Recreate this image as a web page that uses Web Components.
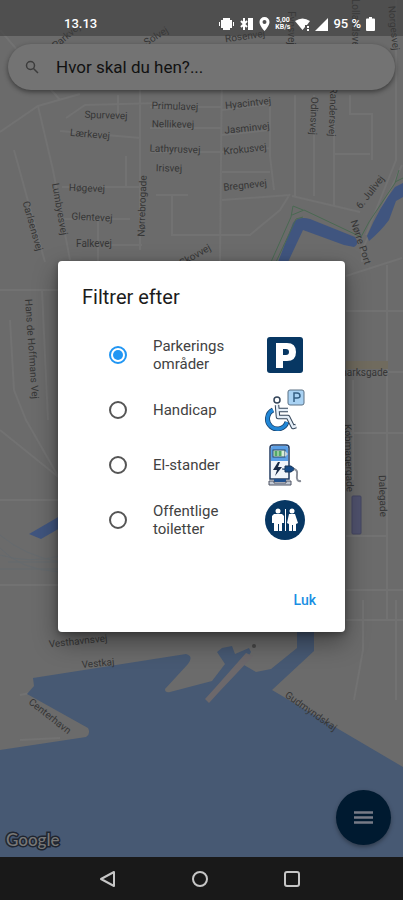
<!DOCTYPE html>
<html lang="da">
<head>
<meta charset="utf-8">
<meta name="viewport" content="width=device-width, initial-scale=1">
<title>Parkering</title>
<style>
body {
    margin: 0;
    font-family: Roboto, "Liberation Sans", sans-serif;
    background: #696969;
}
</style>
</head>
<body>
<phone-screen>
    <city-map slot="map"></city-map>
    <status-bar slot="status" time="13.13" battery="95 %"></status-bar>
    <search-bar slot="search" text="Hvor skal du hen?..."></search-bar>
    <map-footer slot="footer"></map-footer>
    <filter-dialog slot="dialog">
        <span slot="title">Filtrer efter</span>
        <filter-option icon="parking" checked>Parkerings områder</filter-option>
        <filter-option icon="handicap">Handicap</filter-option>
        <filter-option icon="charger">El-stander</filter-option>
        <filter-option icon="toilet">Offentlige toiletter</filter-option>
        <span slot="close">Luk</span>
    </filter-dialog>
    <nav-bar slot="nav"></nav-bar>
</phone-screen>

<script>
class PhoneScreen extends HTMLElement {
    constructor() {
        super();
        this.attachShadow({mode: 'open'}).innerHTML = `
        <style>
        :host {
            display: grid;
            grid-template-columns: minmax(0, 1fr);
            grid-template-rows: auto 1fr auto;
            min-height: 100vh;
            overflow: hidden;
        }
        .map { grid-area: 1 / 1 / 4 / 2; display: grid; }
        .status { grid-area: 1 / 1; z-index: 1; }
        .main {
            grid-area: 2 / 1;
            z-index: 1;
            display: flex;
            flex-direction: column;
            justify-content: space-between;
        }
        .dialog {
            grid-area: 2 / 1;
            z-index: 2;
            align-self: center;
            padding: 0 58px;
        }
        .nav { grid-area: 3 / 1; z-index: 1; }
        </style>
        <div class="map"><slot name="map"></slot></div>
        <div class="status"><slot name="status"></slot></div>
        <div class="main">
            <slot name="search"></slot>
            <slot name="footer"></slot>
        </div>
        <div class="dialog"><slot name="dialog"></slot></div>
        <div class="nav"><slot name="nav"></slot></div>`;
    }
}

// x, y, angle, name - anchored at the middle of the word
const streets = [
    [66, 36, -40, 'Parkvej'],
    [156, 36, -32, 'Solvej'],
    [245, 36, -8, 'Rosenvej'],
    [291, 28, 90, 'Fynsvej'],
    [355, 24, 90, 'Lollandsvej'],
    [394, 28, 84, 'Norgesvej'],
    [106, 115, 2, 'Spurvevej'],
    [90, 134, 5, 'Lærkevej'],
    [175, 106, 2, 'Primulavej'],
    [173, 124, 1, 'Nellikevej'],
    [175, 149, 2, 'Lathyrusvej'],
    [169, 168, 1, 'Irisvej'],
    [248, 103, -6, 'Hyacintvej'],
    [247, 128, -6, 'Jasminvej'],
    [245, 149, -6, 'Krokusvej'],
    [245, 185, -6, 'Bregnevej'],
    [314, 116, 92, 'Odinsvej'],
    [333, 112, 92, 'Randersvej'],
    [87, 188, 2, 'Høgevej'],
    [92, 217, 3, 'Glentevej'],
    [94, 243, 0, 'Falkevej'],
    [142, 206, -88, 'Nørrebrogade'],
    [60, 209, 80, 'Lumbyesvej'],
    [33, 226, 74, 'Carlsensvej'],
    [195, 255, -30, 'Skovvej'],
    [370, 192, -52, '6. Julivej'],
    [361, 242, 72, 'Nørre Port'],
    [32, 349, 86, 'Hans de Hoffmans Vej'],
    [363, 372, 0, 'marksgade'],
    [349, 458, 88, 'Købmagergade'],
    [383, 496, 88, 'Dalegade'],
    [78, 641, -6, 'Vesthavnsvej'],
    [98, 663, -5, 'Vestkaj'],
    [50, 716, 38, 'Centerhavn'],
    [311, 711, 35, 'Gudmyndskaj']
];

class CityMap extends HTMLElement {
    constructor() {
        super();
        const labels = streets.map(([x, y, angle, name]) =>
            `<text transform="translate(${x} ${y}) rotate(${angle})">${name}</text>`).join('');
        this.attachShadow({mode: 'open'}).innerHTML = `
        <style>
        :host { display: grid; background: #6b6b6b; }
        svg { width: 100%; height: 100%; min-height: 0; }
        .roads { fill: none; stroke: #727272; stroke-width: 2; }
        .rails { fill: none; stroke: #656a6e; stroke-width: 1; }
        .water { fill: #475973; }
        .canal { fill: #40557f; }
        .park { fill: none; stroke: #4a6952; stroke-width: 1; }
        text {
            font: 10px Roboto, "Liberation Sans", sans-serif;
            fill: #363636;
            text-anchor: middle;
            dominant-baseline: central;
        }
        </style>
        <svg viewBox="0 0 403 900" preserveAspectRatio="xMidYMid slice" role="img" aria-label="Kort">
            <path class="roads" d="M0 132L38 106L80 94M38 106L53 170L70 260M14 150L36 230L45 262M0 30L60 100M60 131L140 138V250M66 118L85 105L160 103M118 95V115M62 187H142M126 156V188M60 219H130M98 220V262M108 245H142M0 290H58M42 290L48 420M10 320L14 390L26 420L58 476M0 430L62 480M0 500H60M0 585H60M140 85V138M222 60L220 262M150 107H222M150 128H222M150 152H222M156 195H188M172 195V235H250L280 210L290 194M222 110L270 104V156L274 190M222 135L270 130M222 152L270 148M222 172H270M222 200L290 195M295 95V196M314 95V196M334 90V205M350 95V114H372V160M335 154H370M292 196L360 212M396 0V160L366 235M402 165L362 250V262M346 276L402 258M346 311H403M346 372H403M387 265V620M353 380V480M346 433H403M346 536H386M346 590H403M363 600V650L354 700M396 600V700M346 620H403M20 695L45 690M20 740L60 738"/>
            <path class="rails" d="M0 535Q25 556 60 562M0 555Q30 564 60 556M8 562H60M0 569H60M0 548Q20 570 60 572"/>
            <rect x="346" y="361" width="42" height="8" fill="#706b5e"/>
            <path class="canal" d="M278 262L293 223Q298 216 310 219L355 237Q360 244 354 247L344 245L303 230L288 262Z"/>
            <path class="canal" d="M367 236Q380 206 395 187L403 183V197L396 201L389 220Q380 232 369 241Z"/>
            <path class="canal" d="M29 534L60 516V528L41 539Z"/>
            <path class="park" d="M271 262L291 217L293 206L303 210M292 215L304 210L361 237L369 222L395 183L399 170M395 182L403 178M276 262L296 219L303 217"/>
            <path class="water" d="M0 750L86 737Q91 734 88 728L27 694L34 686L33 678L186 654Q194 656 188 664L165 689Q165 693 170 692L212 681L225 664L217 652L222 648L232 646L235 654L249 648L251 652L244 665L256 672L271 669L297 648V632H314V651L272 690L403 767V858H0Z"/>
            <path d="M205 699L215 688L246 653L253 656L219 692L209 703Z" fill="#6c686b"/>
            <circle cx="254" cy="646" r="2" fill="#464646"/>
            <rect x="352" y="496" width="9" height="38" rx="1" fill="#50526e" stroke="#444662"/>
            ${labels}
        </svg>`;
    }
}

class StatusBar extends HTMLElement {
    connectedCallback() {
        if (this.shadowRoot) return;
        this.attachShadow({mode: 'open'}).innerHTML = `
        <style>
        :host {
            display: flex;
            justify-content: space-between;
            align-items: center;
            height: 24px;
            padding: 12px 28px 0 64px;
            color: #fff;
            background: rgba(60, 60, 60, .6);
            font-size: 13px;
            font-weight: 500;
            line-height: 16px;
        }
        .icons { display: flex; align-items: center; gap: 5px; }
        .speed { font-size: 7px; line-height: 7px; font-weight: 700; text-align: center; }
        svg { display: block; fill: #fff; }
        </style>
        <time>${this.getAttribute('time')}</time>
        <div class="icons">
            <svg width="15" height="14" viewBox="0 0 15 14"><path d="M4 1h7v12H4zM2 3h2v8H2zM11 3h2v8h-2zM0 5h1v4H0zM14 5h1v4h-1z"/></svg>
            <svg width="15" height="14" viewBox="0 0 15 14"><path d="M9 1h5v12H9z"/><path d="M2 4l6 6M2 10l6-6M5 1v12" stroke="#fff" stroke-width="2"/></svg>
            <svg width="11" height="14" viewBox="0 0 11 14"><path fill-rule="evenodd" d="M5.500 0A5 5 0 0 0 .5 5C.5 9 5.500 14 5.500 14S10.500 9 10.500 5A5 5 0 0 0 5.500 0zM5.500 3a2 2 0 1 1 0 4a2 2 0 0 1 0-4z"/></svg>
            <div class="speed">5,00<br>KB/s</div>
            <svg width="15" height="13" viewBox="0 0 15 13"><path d="M0 3Q7.500-2 15 3L12 7H10V9L7.500 12zM12 8h2v2h-2zM12 11h2v2h-2z"/></svg>
            <svg width="13" height="13" viewBox="0 0 13 13"><path d="M13 0V13H0z"/></svg>
            <span>${this.getAttribute('battery')}</span>
            <svg width="9" height="14" viewBox="0 0 9 14"><path d="M3 0h3v1.500h2q1 0 1 1V13q0 1-1 1H1q-1 0-1-1V2.500q0-1 1-1h2z"/></svg>
        </div>`;
    }
}

class SearchBar extends HTMLElement {
    connectedCallback() {
        if (this.shadowRoot) return;
        this.attachShadow({mode: 'open'}).innerHTML = `
        <style>
        :host { display: block; padding: 8px 8px 0; }
        label {
            display: flex;
            align-items: center;
            gap: 16px;
            height: 46px;
            padding: 0 16px;
            border-radius: 24px;
            background: #737373;
            box-shadow: 0 2px 5px rgba(0, 0, 0, .45);
        }
        input {
            flex: 1;
            min-width: 0;
            padding: 0;
            border: 0;
            outline: 0;
            background: none;
            color: #111;
            font: inherit;
            font-size: 17px;
        }
        input::placeholder { color: #111; opacity: 1; }
        svg { flex: none; fill: none; stroke: #3c3c3c; stroke-width: 1.5; }
        </style>
        <label>
            <svg width="16" height="16" viewBox="0 0 16 16"><circle cx="6.500" cy="6.500" r="4"/><path d="M9.500 9.500L14 14"/></svg>
            <input type="text" placeholder="${this.getAttribute('text')}" aria-label="Søg">
        </label>`;
    }
}

class MapFooter extends HTMLElement {
    constructor() {
        super();
        this.attachShadow({mode: 'open'}).innerHTML = `
        <style>
        :host {
            display: flex;
            justify-content: space-between;
            align-items: flex-end;
            padding: 0 12px 7px 6px;
        }
        .logo {
            font: 500 17px/20px Lato, sans-serif;
            color: #777;
            -webkit-text-stroke: 3px #1f2530;
            paint-order: stroke fill;
        }
        button {
            display: grid;
            place-items: center;
            width: 55px;
            height: 55px;
            margin-bottom: 5px;
            padding: 0;
            border: 0;
            border-radius: 50%;
            background: #001a30;
            box-shadow: 0 2px 4px rgba(0, 0, 0, .35);
        }
        </style>
        <span class="logo">Google</span>
        <button type="button" aria-label="Menu">
            <svg width="19" height="15" viewBox="0 0 19 15" fill="none" stroke="#777b86" stroke-width="2.500"><path d="M0 2.500h19M0 7.500h19M0 12.500h19"/></svg>
        </button>`;
    }
}

class FilterDialog extends HTMLElement {
    constructor() {
        super();
        this.attachShadow({mode: 'open'}).innerHTML = `
        <style>
        section {
            display: flex;
            flex-direction: column;
            padding: 24px 24px 14px;
            border-radius: 4px;
            background: #fff;
            box-shadow: 0 10px 24px rgba(0, 0, 0, .4), 0 2px 6px rgba(0, 0, 0, .3);
        }
        h2 {
            margin: 0 0 18px;
            color: #1c1c1c;
            font-size: 20px;
            font-weight: 400;
            line-height: 24px;
        }
        .options { display: grid; margin-bottom: 35px; }
        button {
            align-self: flex-end;
            height: 36px;
            padding: 0 5px;
            border: 0;
            background: none;
            color: #1a8fe3;
            font: inherit;
            font-size: 14px;
            font-weight: 500;
        }
        </style>
        <section role="dialog" aria-labelledby="title">
            <h2 id="title"><slot name="title"></slot></h2>
            <div class="options" role="radiogroup" aria-labelledby="title"><slot></slot></div>
            <button type="button"><slot name="close"></slot></button>
        </section>`;
        this.shadowRoot.querySelector('button').onclick = () => { this.hidden = true; };
        // radios in separate shadow roots don't group by name
        this.addEventListener('pick', e => {
            this.querySelectorAll('filter-option').forEach(o => { o.checked = o === e.target; });
        });
    }
}

const icons = {
    parking: `<rect x="3" y="3" width="36" height="36" rx="3" fill="#073763"/>
        <path fill="#fff" fill-rule="evenodd" d="M12 9H23Q32 9 32 18Q32 27 23 27H19V34H12zM19 15V21H22Q25 21 25 18Q25 15 22 15z"/>`,
    handicap: `<rect x="24" y="1" width="16" height="15" rx="2" fill="#a9d2f3" stroke="#5b7184"/>
        <path d="M30 13V4H33Q36 4 36 7Q36 9 33 9H30" fill="none" stroke="#345f83" stroke-width="1.500"/>
        <path d="M9 21A10 10 0 1 0 23 33" fill="none" stroke="#173f69" stroke-width="5"/>
        <path d="M9 21A10 10 0 1 0 23 33" fill="none" stroke="#2186d5" stroke-width="3.500"/>
        <path d="M13 16L14 28H24L29 38L32 37M14 21H24" fill="none" stroke="#34465a" stroke-width="4.500" stroke-linejoin="round"/>
        <path d="M13 16L14 28H24L29 38L32 37M14 21H24" fill="none" stroke="#e6eff8" stroke-width="2.500" stroke-linejoin="round"/>
        <circle cx="13" cy="11" r="3" fill="#fff" stroke="#34465a" stroke-width="1.500"/>`,
    charger: `<path d="M6 35V4Q6 1 9 1H22Q25 1 25 4V35z" fill="#f1f5fa" stroke="#233c62" stroke-width="1.500"/>
        <path d="M7 17V4Q7 2 9 2H22Q24 2 24 4V17z" fill="#5b9fe6"/>
        <rect x="9" y="6" width="12" height="7" fill="#d7eed7" stroke="#29496b"/>
        <path d="M12 7V12M16 7V12" stroke="#54a866" stroke-width="3"/>
        <path d="M21 7L24 10L21 13z" fill="#c8d2db"/>
        <path d="M14 18L9 26H13L11 32L18 23H14L16 18z" fill="#182b48"/>
        <path d="M18 25H21V22H27L31 25L27 28H21V26" fill="#164b87" stroke="#173458"/>
        <path d="M30 25Q34 26 33 31Q32 38 37 37" fill="none" stroke="#8b8f98" stroke-width="2"/>
        <path d="M10 35H22V38H10z" fill="#205291"/>
        <path d="M5 37H10V39H22V37H27V41H5z" fill="#c2c9d4" stroke="#4c5363" stroke-width="1"/>`,
    toilet: `<circle cx="21" cy="21" r="20" fill="#073763"/>
        <g fill="#fff"><circle cx="14" cy="12" r="2.500"/><path d="M10 15H18L20 17V24H18V32H15V25H14V32H10V24H8V17z"/>
        <path d="M21 10H22V32H21z"/><circle cx="28" cy="12" r="2.500"/><path d="M25 15H31L34 24L32 25V32H29V26H28V32H25V25L23 24z"/></g>`
};

class FilterOption extends HTMLElement {
    connectedCallback() {
        if (this.shadowRoot) return;
        this.attachShadow({mode: 'open'}).innerHTML = `
        <style>
        :host { display: block; }
        label {
            display: flex;
            align-items: center;
            min-height: 55px;
            padding: 0 15px 0 27px;
            color: #424242;
            font-size: 15px;
            line-height: 18px;
        }
        input {
            flex: none;
            appearance: none;
            display: grid;
            place-items: center;
            width: 18px;
            height: 18px;
            margin: 0 26px 0 0;
            border: 2px solid #555;
            border-radius: 50%;
        }
        input:checked { border-color: #2196f3; }
        input:checked::before {
            content: "";
            width: 10px;
            height: 10px;
            border-radius: 50%;
            background: #2196f3;
        }
        .name { flex: 1; padding-right: 24px; }
        svg { flex: none; }
        </style>
        <label>
            <input type="radio">
            <span class="name"><slot></slot></span>
            <svg width="42" height="42" viewBox="0 0 42 42" aria-hidden="true">${icons[this.getAttribute('icon')]}</svg>
        </label>`;
        this.input = this.shadowRoot.querySelector('input');
        this.input.checked = this.hasAttribute('checked');
        this.input.onchange = () => this.dispatchEvent(new Event('pick', {bubbles: true}));
    }

    set checked(value) {
        this.input.checked = value;
    }
}

class NavBar extends HTMLElement {
    constructor() {
        super();
        this.attachShadow({mode: 'open'}).innerHTML = `
        <style>
        nav {
            display: flex;
            justify-content: center;
            align-items: center;
            gap: 68px;
            height: 43px;
            padding-right: 3px;
            background: #191919;
        }
        button { display: grid; padding: 0; border: 0; background: none; }
        svg { fill: none; stroke: #c6c6c6; stroke-width: 2; }
        </style>
        <nav>
            <button type="button" aria-label="Tilbage"><svg width="24" height="24" viewBox="0 0 24 24"><path stroke-linejoin="round" d="M18 5V19L5 12z"/></svg></button>
            <button type="button" aria-label="Hjem"><svg width="24" height="24" viewBox="0 0 24 24"><circle cx="12" cy="12" r="7"/></svg></button>
            <button type="button" aria-label="Oversigt"><svg width="24" height="24" viewBox="0 0 24 24"><rect x="5" y="5" width="14" height="14" rx="2"/></svg></button>
        </nav>`;
    }
}

customElements.define('phone-screen', PhoneScreen);
customElements.define('city-map', CityMap);
customElements.define('status-bar', StatusBar);
customElements.define('search-bar', SearchBar);
customElements.define('map-footer', MapFooter);
customElements.define('filter-option', FilterOption);
customElements.define('filter-dialog', FilterDialog);
customElements.define('nav-bar', NavBar);
</script>
</body>
</html>
